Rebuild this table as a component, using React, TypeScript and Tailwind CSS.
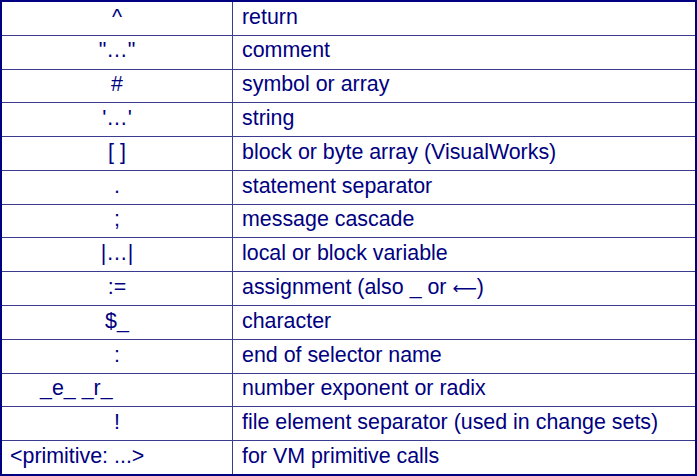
const rows: { sym: string; desc: React.ReactNode; align?: string }[] = [
  { sym: "^", desc: "return" },
  { sym: "\"…\"", desc: "comment" },
  { sym: "#", desc: "symbol or array" },
  { sym: "'…'", desc: "string" },
  { sym: "[ ]", desc: "block or byte array (VisualWorks)" },
  { sym: ".", desc: "statement separator" },
  { sym: ";", desc: "message cascade" },
  { sym: "|…|", desc: "local or block variable" },
  {
    sym: ":=",
    desc: (
      <>
        assignment (also _ or{" "}
        <span style={{ fontFamily: '"DejaVu Sans", sans-serif' }} className="text-[17px]">
          ⟵
        </span>
        )
      </>
    ),
  },
  { sym: "$_", desc: "character" },
  { sym: ":", desc: "end of selector name" },
  { sym: "_e_ _r_", desc: "number exponent or radix", align: "justify-start pl-[38px]" },
  { sym: "!", desc: "file element separator (used in change sets)" },
  { sym: "<primitive: ...>", desc: "for VM primitive calls", align: "justify-start pl-[8px]" },
];

export default function App() {
  return (
    <div
      className="w-[697px] h-[476px] overflow-hidden bg-white border-2 border-[#000080] flex flex-col text-[21.4px] leading-none text-[#000080]"
      style={{ fontFamily: '"Liberation Sans", Arial, sans-serif' }}
    >
      {rows.map((row, i) => (
        <div
          key={i}
          className={`flex-1 basis-0 min-h-0 grid grid-cols-[231px_1fr] ${
            i > 0 ? "border-t border-[#3b3b90]" : ""
          }`}
        >
          <div
            className={`flex items-center pb-[2px] border-r border-[#3b3b90] ${
              row.align ?? "justify-center"
            }`}
          >
            <span className="whitespace-pre">{row.sym}</span>
          </div>
          <div className="flex items-center pb-[2px] pl-[9px]">
            <span>{row.desc}</span>
          </div>
        </div>
      ))}
    </div>
  );
}
